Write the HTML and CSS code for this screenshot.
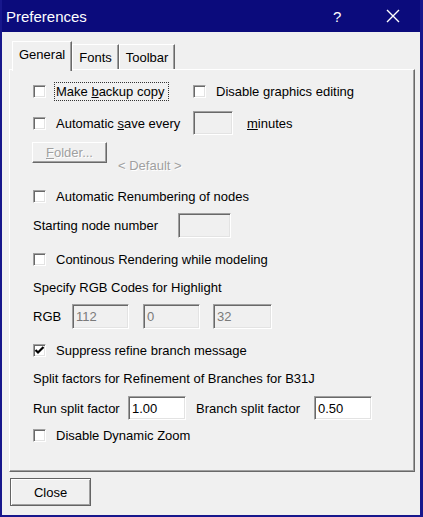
FILE: index.html
```html
<!DOCTYPE html>
<html>
<head>
<meta charset="utf-8">
<link rel="stylesheet" href="styles.css">
</head>
<body>
<div class="window">
  <div class="titlebar">
    <span class="title">Preferences</span>
    <span class="help">?</span>
    <span class="xbtn"><svg width="14" height="14" viewBox="0 0 14 14"><path d="M1 1 L13 13 M13 1 L1 13" stroke="#fff" stroke-width="1.4" fill="none"/></svg></span>
  </div>
  <div class="tabs">
    <div class="tab active">General</div>
    <div class="tab">Fonts</div>
    <div class="tab">Toolbar</div>
  </div>
  <div class="panel">
    <div class="row r1">
      <label class="cb w160"><span class="box"></span><span class="lbl focus">Make <u>b</u>ackup copy</span></label>
      <label class="cb"><span class="box"></span><span class="lbl">Disable <u>g</u>raphics editing</span></label>
    </div>
    <div class="row r2">
      <label class="cb w160"><span class="box"></span><span class="lbl">Automatic <u>s</u>ave every</span></label>
      <span class="field dis w40"></span>
      <span class="minutes"><u>m</u>inutes</span>
    </div>
    <div class="row r3">
      <span class="btn-folder"><u>F</u>older...</span>
      <span class="default">&lt; Default &gt;</span>
    </div>
    <div class="row r4">
      <label class="cb"><span class="box"></span><span class="lbl">Automatic Renumbering of nodes</span></label>
    </div>
    <div class="row r5">
      <span class="lab w145">Starting node number</span>
      <span class="field dis w53"></span>
    </div>
    <div class="row r6">
      <label class="cb"><span class="box"></span><span class="lbl">Continous Rendering while modeling</span></label>
    </div>
    <div class="row r7">
      <span class="lab">Specify RGB Codes for Highlight</span>
    </div>
    <div class="row r8">
      <span class="lab w39">RGB</span>
      <span class="field dis w57">112</span>
      <span class="field dis w57 ml14">0</span>
      <span class="field dis w59 ml13">32</span>
    </div>
    <div class="row r9">
      <label class="cb"><span class="box"><svg width="11" height="11" viewBox="0 0 11 11"><path d="M1.5 5 L4 7.5 L9.5 2" stroke="#000" stroke-width="2.2" fill="none"/></svg></span><span class="lbl">Suppress refine branch message</span></label>
    </div>
    <div class="row r10">
      <span class="lab">Split factors for Refinement of Branches for B31J</span>
    </div>
    <div class="row r11">
      <span class="lab w95">Run split factor</span>
      <span class="field w58">1.00</span>
      <span class="lab w118 ml10">Branch split factor</span>
      <span class="field w58">0.50</span>
    </div>
    <div class="row r12">
      <label class="cb"><span class="box"></span><span class="lbl">Disable Dynamic Zoom</span></label>
    </div>
  </div>
  <div class="footer">
    <span class="btn-close">Close</span>
  </div>
</div>
</body>
</html>
```
FILE: styles.css
```css
html, body {
  margin: 0;
  padding: 0;
  background: #f0f0f0;
}
body {
  font-family: "Liberation Sans", Arial, sans-serif;
  font-size: 13px;
  color: #000;
}
.window {
  width: 423px;
  height: 517px;
  box-sizing: border-box;
  border-left: 2px solid #17178c;
  border-right: 3px solid #17178c;
  border-bottom: 2px solid #17178c;
  background: #f0f0f0;
  display: flex;
  flex-direction: column;
}
.titlebar {
  height: 32px;
  flex: none;
  background: #0b0b7c;
  color: #fff;
  display: flex;
  align-items: center;
  padding-left: 4px;
}
.title {
  flex: 1;
  font-size: 15px;
}
.help {
  font-size: 15px;
  width: 20px;
  margin-right: 33px;
}
.xbtn {
  width: 34px;
  display: flex;
}
.tabs {
  display: flex;
  align-items: flex-end;
  height: 29px;
  margin-top: 8px;
  padding-left: 10px;
  flex: none;
}
.tab {
  height: 25px;
  box-sizing: border-box;
  padding: 0 6px;
  display: flex;
  align-items: center;
  border-left: 1px solid #fff;
  border-top: 1px solid #fff;
  border-right: 1px solid #696969;
  box-shadow: inset -1px 0 0 #a0a0a0;
  background: #f0f0f0;
}
.tab.active {
  height: 30px;
  margin-bottom: -2px;
  padding: 0 6px 4px 6px;
  position: relative;
  z-index: 1;
}
.panel {
  margin-left: 7px;
  width: 406px;
  height: 403px;
  box-sizing: border-box;
  border-left: 1px solid #fff;
  border-top: 1px solid #fff;
  border-right: 1px solid #696969;
  border-bottom: 1px solid #696969;
  box-shadow: inset -1px -1px 0 #a0a0a0;
  padding: 1px 0 0 23px;
  display: flex;
  flex-direction: column;
  flex: none;
}
.row {
  display: flex;
  align-items: center;
  flex: none;
}
.r1 { margin-top: 9px; height: 22px; }
.r2 { margin-top: 9px; height: 24px; }
.r3 { margin-top: 7px; height: 29px; align-items: flex-start; }
.r4 { margin-top: 15px; height: 20px; }
.r5 { margin-top: 6px; height: 26px; }
.r6 { margin-top: 11px; height: 20px; }
.r7 { margin-top: 8px; height: 20px; }
.r8 { margin-top: 6px; height: 26px; }
.r9 { margin-top: 11px; height: 20px; }
.r10 { margin-top: 8px; height: 20px; }
.r11 { margin-top: 8px; height: 24px; }
.r12 { margin-top: 5px; height: 20px; }

.cb {
  display: flex;
  align-items: center;
}
.box {
  width: 13px;
  height: 13px;
  box-sizing: border-box;
  background: #fff;
  border-left: 1px solid #a0a0a0;
  border-top: 1px solid #a0a0a0;
  border-right: 1px solid #fff;
  border-bottom: 1px solid #fff;
  box-shadow: inset 1px 1px 0 #696969, inset -1px -1px 0 #e3e3e3;
  display: flex;
  align-items: center;
  justify-content: center;
  flex: none;
}
.lbl {
  margin-left: 8px;
  padding: 1px 2px 1px 1px;
  border: 1px solid transparent;
  white-space: nowrap;
}
.lbl.focus {
  border: 1px dotted #333;
  padding-right: 4px;
}
.w160 { width: 160px; flex: none; }
.w145 { width: 145px; flex: none; }
.w39 { width: 39px; flex: none; }
.w95 { width: 95px; flex: none; }
.w118 { width: 118px; flex: none; }
.w40 { width: 40px; }
.w53 { width: 53px; }
.w57 { width: 57px; }
.w58 { width: 58px; }
.w59 { width: 59px; }
.ml14 { margin-left: 14px; }
.ml13 { margin-left: 13px; }
.ml10 { margin-left: 10px; }
.lab {
  white-space: nowrap;
}
.field {
  height: 24px;
  box-sizing: border-box;
  flex: none;
  background: #fff;
  border-left: 1px solid #a0a0a0;
  border-top: 1px solid #a0a0a0;
  border-right: 1px solid #fff;
  border-bottom: 1px solid #fff;
  box-shadow: inset 1px 1px 0 #696969, inset -1px -1px 0 #e3e3e3;
  padding-left: 3px;
  display: flex;
  align-items: center;
}
.field.dis {
  background: #f0f0f0;
  color: #7a7a7a;
}
.r8 .field { height: 25px; }
.r5 .field { height: 25px; }
.minutes {
  margin-left: 14px;
}
.btn-folder {
  width: 75px;
  height: 21px;
  margin-left: -1px;
  box-sizing: border-box;
  border-left: 1px solid #fff;
  border-top: 1px solid #fff;
  border-right: 1px solid #696969;
  border-bottom: 1px solid #696969;
  box-shadow: inset -1px -1px 0 #a0a0a0;
  display: flex;
  align-items: center;
  justify-content: center;
  color: #a0a0a0;
  text-shadow: 1px 1px 0 #fff;
}
.default {
  margin-left: 11px;
  margin-top: 16px;
  line-height: 16px;
  color: #a0a0a0;
  text-shadow: 1px 1px 0 #fff;
}
.footer {
  padding: 6px 0 0 8px;
  flex: none;
}
.btn-close {
  width: 81px;
  height: 28px;
  box-sizing: border-box;
  border: 1px solid #646464;
  box-shadow: inset 1px 1px 0 #fff, inset -1px -1px 0 #a0a0a0;
  display: flex;
  align-items: center;
  justify-content: center;
  background: #f0f0f0;
}
```
